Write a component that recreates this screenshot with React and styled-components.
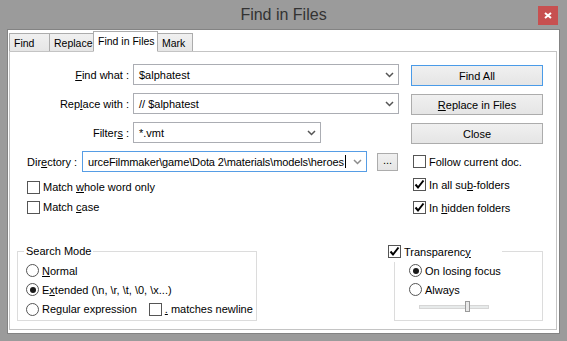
import React from 'react';
import styled, { createGlobalStyle } from 'styled-components';

const GlobalStyle = createGlobalStyle`
  body {
    margin: 0;
    font-family: "Liberation Sans", Arial, sans-serif;
  }
  * {
    box-sizing: border-box;
  }
`;

const Chevron = ({ color }) => (
  <svg width="9" height="6" viewBox="0 0 9 6">
    <path d="M1 1 L4.5 4.5 L8 1" stroke={color} strokeWidth="1.5" fill="none" />
  </svg>
);

const CheckBox = ({ checked, children }) => (
  <CheckRow>
    <Box>
      {checked && (
        <svg width="11" height="11" viewBox="0 0 11 11">
          <path d="M1.5 5.5 L4 8.5 L9.5 1.5" stroke="#000" strokeWidth="2" fill="none" />
        </svg>
      )}
    </Box>
    <span>{children}</span>
  </CheckRow>
);

const Radio = ({ checked, children }) => (
  <RadioRow>
    <Circle>{checked && <Dot />}</Circle>
    <span>{children}</span>
  </RadioRow>
);

const App = () => {
  return (
    <>
      <GlobalStyle />
      <Window>
        <TitleBar>
          <Title>Find in Files</Title>
          <CloseButton>
            <svg width="8" height="7" viewBox="0 0 8 7">
              <path d="M1 1 L7 6 M7 1 L1 6" stroke="#fff" strokeWidth="2" />
            </svg>
          </CloseButton>
        </TitleBar>
        <Client>
          <TabRow>
            <Tab w={41}>Find</Tab>
            <Tab w={45}>Replace</Tab>
            <Tab w={65} active>Find in Files</Tab>
            <Tab w={36}>Mark</Tab>
          </TabRow>
          <Panel>
            <TopArea>
              <LeftCol>
                <FieldRow>
                  <FieldLabel><u>F</u>ind what :</FieldLabel>
                  <Combo w={266}>
                    <ComboText>$alphatest</ComboText>
                    <ArrowBox><Chevron color="#555" /></ArrowBox>
                  </Combo>
                </FieldRow>
                <FieldRow>
                  <FieldLabel>Rep<u>l</u>ace with :</FieldLabel>
                  <Combo w={266}>
                    <ComboText>// $alphatest</ComboText>
                    <ArrowBox><Chevron color="#555" /></ArrowBox>
                  </Combo>
                </FieldRow>
                <FieldRow>
                  <FieldLabel>Filter<u>s</u> :</FieldLabel>
                  <Combo w={188}>
                    <ComboText>*.vmt</ComboText>
                    <ArrowBox><Chevron color="#555" /></ArrowBox>
                  </Combo>
                </FieldRow>
                <DirRow>
                  <DirLabel>Dir<u>e</u>ctory :</DirLabel>
                  <Combo w={285} focused>
                    <ComboText tight>
                      urceFilmmaker\game\Dota 2\materials\models\heroes<Caret />
                    </ComboText>
                    <ArrowBox><Chevron color="#8c8c8c" /></ArrowBox>
                  </Combo>
                  <BrowseButton>...</BrowseButton>
                </DirRow>
                <LeftChecks>
                  <CheckBox>Match <u>w</u>hole word only</CheckBox>
                  <CheckBox>Match <u>c</u>ase</CheckBox>
                </LeftChecks>
              </LeftCol>
              <RightCol>
                <ButtonStack>
                  <Button primary>Find All</Button>
                  <Button><u>R</u>eplace in Files</Button>
                  <Button>Close</Button>
                </ButtonStack>
                <RightChecks>
                  <CheckBox>Follow current doc.</CheckBox>
                  <CheckBox checked>In all su<u>b</u>-folders</CheckBox>
                  <CheckBox checked>In <u>h</u>idden folders</CheckBox>
                </RightChecks>
              </RightCol>
            </TopArea>
            <BottomArea>
              <GroupBox w={240} pad={8}>
                <GroupTitle>Search Mode</GroupTitle>
                <Radio><u>N</u>ormal</Radio>
                <Radio checked>E<u>x</u>tended (\n, \r, \t, \0, \x...)</Radio>
                <RadioLine>
                  <Radio>Re<u>g</u>ular expression</Radio>
                  <CheckBox><u>.</u> matches newline</CheckBox>
                </RadioLine>
              </GroupBox>
              <GroupBox w={149} pad={14}>
                <GroupCheck>
                  <CheckBox checked>Transparenc<u>y</u></CheckBox>
                </GroupCheck>
                <Radio checked>On losing focus</Radio>
                <Radio>Always</Radio>
                <SliderRow>
                  <Track>
                    <Thumb style={{ left: `${(46 / 69) * 100}%` }} />
                  </Track>
                </SliderRow>
              </GroupBox>
            </BottomArea>
          </Panel>
        </Client>
      </Window>
    </>
  );
};

const Window = styled.div`
  width: 567px;
  height: 341px;
  background: #9b9b9b;
  display: flex;
  flex-direction: column;
  font-size: 11px;
  color: #000;
`;

const TitleBar = styled.div`
  height: 29px;
  display: grid;
  grid-template-columns: 1fr auto 1fr;
  align-items: center;
`;

const Title = styled.div`
  grid-column: 2;
  font-size: 16px;
  color: #333;
  padding-top: 1px;
`;

const CloseButton = styled.div`
  grid-column: 3;
  justify-self: end;
  align-self: start;
  margin-top: 6px;
  margin-right: 9px;
  width: 20px;
  height: 19px;
  background: #c75050;
  display: flex;
  align-items: center;
  justify-content: center;
`;

const Client = styled.div`
  flex: 1;
  margin: 0 7px 7px;
  border: 1px solid #838383;
  background: #fff;
  display: flex;
  flex-direction: column;
  padding: 1px 2px 3px 1px;
`;

const TabRow = styled.div`
  display: flex;
  align-items: flex-end;
  height: 21px;
  margin-bottom: -1px;
`;

const Tab = styled.div`
  flex-shrink: 0;
  width: ${props => props.w}px;
  height: ${props => (props.active ? 21 : 19)}px;
  margin-left: -1px;
  &:first-child {
    margin-left: 0;
  }
  border: 1px solid #acacac;
  border-bottom: ${props => (props.active ? '1px solid #fff' : 'none')};
  background: ${props => (props.active ? '#fff' : 'linear-gradient(#f0f0f0, #e5e5e5)')};
  padding-left: 4px;
  padding-bottom: ${props => (props.active ? 2 : 0)}px;
  display: flex;
  align-items: center;
  font-size: 10.5px;
  position: ${props => (props.active ? 'relative' : 'static')};
  z-index: ${props => (props.active ? 1 : 'auto')};
  white-space: nowrap;
  overflow: hidden;
`;

const Panel = styled.div`
  flex: 1;
  border: 1px solid #c4c4c4;
  display: flex;
  flex-direction: column;
  padding: 12px 0 8px 0;
`;

const TopArea = styled.div`
  display: flex;
`;

const LeftCol = styled.div`
  width: 390px;
  display: flex;
  flex-direction: column;
  gap: 8px;
`;

const FieldRow = styled.div`
  display: flex;
  align-items: center;
  height: 21px;
`;

const FieldLabel = styled.div`
  width: 123px;
  text-align: right;
  padding-right: 4px;
  white-space: nowrap;
`;

const Combo = styled.div`
  width: ${props => props.w}px;
  height: 21px;
  border: 1px solid ${props => (props.focused ? '#569de5' : '#abadb3')};
  background: #fff;
  display: flex;
  align-items: center;
`;

const ComboText = styled.div`
  flex: 1;
  padding-left: 5px;
  white-space: nowrap;
  overflow: hidden;
  display: flex;
  align-items: center;
  letter-spacing: ${props => (props.tight ? '-0.12px' : 'normal')};
`;

const Caret = styled.span`
  display: inline-block;
  width: 1px;
  height: 13px;
  background: #000;
  margin-left: 1px;
`;

const ArrowBox = styled.div`
  width: 18px;
  flex-shrink: 0;
  display: flex;
  justify-content: center;
  align-items: center;
`;

const DirRow = styled.div`
  display: flex;
  align-items: center;
  height: 21px;
  padding-left: 17px;
`;

const DirLabel = styled.div`
  width: 55px;
  white-space: nowrap;
`;

const BrowseButton = styled.div`
  margin-left: 10px;
  width: 21px;
  height: 18px;
  border: 1px solid #acacac;
  background: linear-gradient(#f0f0f0, #e5e5e5);
  display: flex;
  justify-content: center;
  align-items: center;
  padding-bottom: 3px;
`;

const LeftChecks = styled.div`
  margin-top: -3px;
  padding-left: 17px;
  display: flex;
  flex-direction: column;
`;

const CheckRow = styled.div`
  display: flex;
  align-items: center;
  height: 20px;
  gap: 3px;
  white-space: nowrap;
`;

const Box = styled.div`
  width: 13px;
  height: 13px;
  border: 1px solid #555;
  background: #fff;
  display: flex;
  justify-content: center;
  align-items: center;
`;

const RightCol = styled.div`
  margin-left: 11px;
  width: 132px;
  display: flex;
  flex-direction: column;
`;

const ButtonStack = styled.div`
  margin-top: 1px;
  display: flex;
  flex-direction: column;
  gap: 8px;
`;

const Button = styled.div`
  height: 21px;
  border: 1px solid ${props => (props.primary ? '#4a9be8' : '#acacac')};
  background: linear-gradient(#f0f0f0, #e5e5e5);
  display: flex;
  justify-content: center;
  align-items: center;
  font-size: 11px;
`;

const RightChecks = styled.div`
  margin-top: 6px;
  padding-left: 2px;
  display: flex;
  flex-direction: column;
  & > div {
    height: 23px;
  }
`;

const BottomArea = styled.div`
  margin-top: auto;
  display: flex;
  justify-content: space-between;
  padding: 0 13px 0 7px;
`;

const GroupBox = styled.div`
  position: relative;
  width: ${props => props.w}px;
  height: 70px;
  border: 1px solid #dcdcdc;
  padding: 9px 0 0 ${props => props.pad}px;
  display: flex;
  flex-direction: column;
`;

const GroupTitle = styled.div`
  position: absolute;
  left: 6px;
  top: -8px;
  padding: 0 2px;
  background: #fff;
  line-height: 14px;
`;

const GroupCheck = styled.div`
  position: absolute;
  left: -7px;
  top: -11px;
  width: 114px;
  height: 21px;
  background: #fff;
  display: flex;
  align-items: center;
`;

const RadioRow = styled.div`
  display: flex;
  align-items: center;
  height: 19px;
  gap: 3px;
  white-space: nowrap;
`;

const RadioLine = styled.div`
  display: flex;
  align-items: center;
  gap: 12px;
`;

const Circle = styled.div`
  width: 13px;
  height: 13px;
  border-radius: 50%;
  border: 1px solid #555;
  background: #fff;
  display: flex;
  justify-content: center;
  align-items: center;
`;

const Dot = styled.div`
  width: 6px;
  height: 6px;
  border-radius: 50%;
  background: #1a1a1a;
`;

const SliderRow = styled.div`
  height: 16px;
  display: flex;
  align-items: center;
  padding-left: 10px;
`;

const Track = styled.div`
  position: relative;
  width: 70px;
  height: 4px;
  background: #e7eaea;
  border: 1px solid #d6d6d6;
`;

const Thumb = styled.div`
  position: absolute;
  top: -5px;
  width: 5px;
  height: 11px;
  border: 1px solid #9a9a9a;
  background: #e9e9e9;
`;

export default App;
